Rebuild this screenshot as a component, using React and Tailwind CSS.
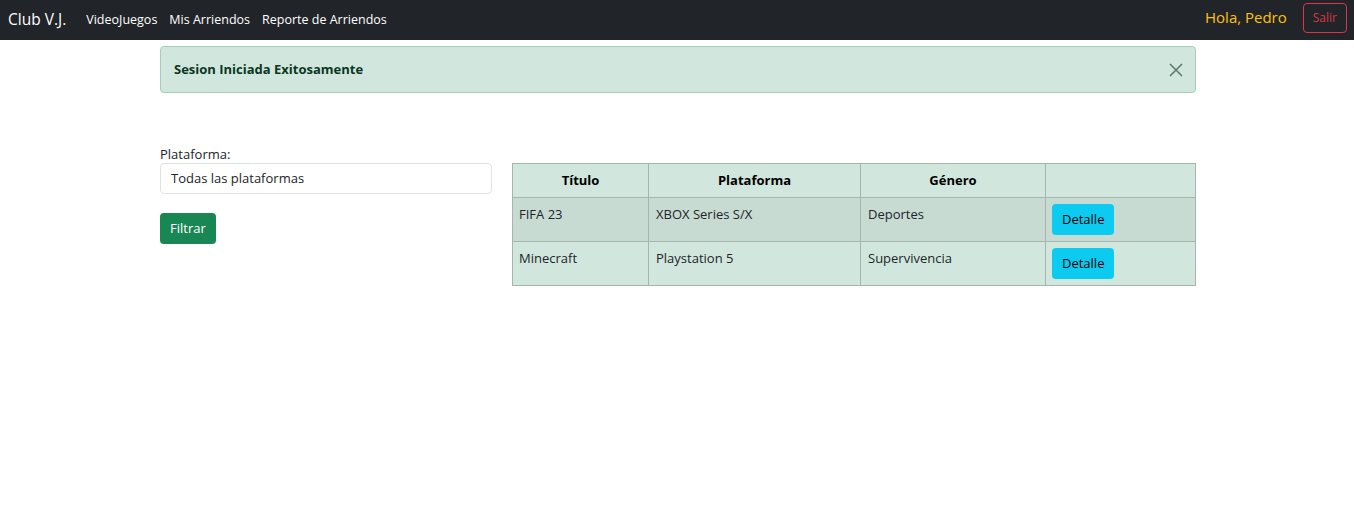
import React from "react";

export default function App() {
  const rows = [
    { t: "FIFA 23", p: "XBOX Series S/X", g: "Deportes" },
    { t: "Minecraft", p: "Playstation 5", g: "Supervivencia" },
  ];
  return (
    <div className="min-h-[507px] bg-white text-[13px] text-[#212529]" style={{ fontFamily: '"Open Sans", "Noto Sans", sans-serif' }}>
      <nav className="h-10 bg-[#212529] flex items-center justify-between pl-2 pr-[7px]">
        <div className="flex items-center">
          <span className="text-[15.5px] text-white mr-[20px]">Club V.J.</span>
          <div className="flex gap-[12px] text-[12.5px] text-white">
            <span>VideoJuegos</span>
            <span>Mis Arriendos</span>
            <span>Reporte de Arriendos</span>
          </div>
        </div>
        <div className="flex items-center">
          <span className="text-[15px] text-[#ffc107] mr-4 -mt-[6px]">Hola, Pedro</span>
          <button className="h-[30px] -mt-[4px] px-[9px] border border-[#dc3545] rounded-[4px] text-[#dc3545] text-[12px]">Salir</button>
        </div>
      </nav>
      <div className="pl-[160px] pr-[158px] pt-[6px]">
        <div className="h-[47px] bg-[#d1e7dd] border border-[#a3cfbb] rounded-[4px] flex items-center justify-between pl-[13px] pr-[12px]">
          <span className="font-bold text-[#0a3622] text-[13px] mt-[1px]">Sesion Iniciada Exitosamente</span>
          <svg width="14" height="14" viewBox="0 0 14 14" className="text-[#5f7a6c]">
            <path d="M1 1 L13 13 M13 1 L1 13" stroke="currentColor" strokeWidth="1.6" />
          </svg>
        </div>
        <div className="flex mt-[53px] gap-5">
          <div className="w-[332px]">
            <div className="text-[13px] leading-[16px] mb-[1px]">Plataforma:</div>
            <div className="h-[31px] border border-[#dee2e6] rounded-[4px] flex items-center px-[10px] text-[13px]">Todas las plataformas</div>
            <button className="mt-[19px] h-[31px] px-[10px] bg-[#198754] text-white rounded-[4px] text-[13px]">Filtrar</button>
          </div>
          <div className="flex-1 mt-[17px]">
            <table className="w-full border-collapse text-[13px]">
              <thead>
                <tr className="bg-[#d1e7dd] h-[34px]">
                  <th className="border border-[#a6b5ae] w-[136px] font-bold text-black">Título</th>
                  <th className="border border-[#a6b5ae] w-[212px] font-bold text-black">Plataforma</th>
                  <th className="border border-[#a6b5ae] w-[185px] font-bold text-black">Género</th>
                  <th className="border border-[#a6b5ae]"></th>
                </tr>
              </thead>
              <tbody>
                {rows.map((r, i) => (
                  <tr key={i} className={i === 0 ? "bg-[#c7dbd2] h-[44px]" : "bg-[#d1e7dd] h-[44px]"}>
                    <td className="border border-[#a6b5ae] align-top px-[6px] pt-[7px]">{r.t}</td>
                    <td className="border border-[#a6b5ae] align-top px-[7px] pt-[7px]">{r.p}</td>
                    <td className="border border-[#a6b5ae] align-top px-[7px] pt-[7px]">{r.g}</td>
                    <td className="border border-[#a6b5ae] align-top px-[6px] pt-[6px]">
                      <button className="h-[31px] px-[10px] bg-[#0dcaf0] rounded-[4px] text-[13px] text-black">Detalle</button>
                    </td>
                  </tr>
                ))}
              </tbody>
            </table>
          </div>
        </div>
      </div>
    </div>
  );
}
